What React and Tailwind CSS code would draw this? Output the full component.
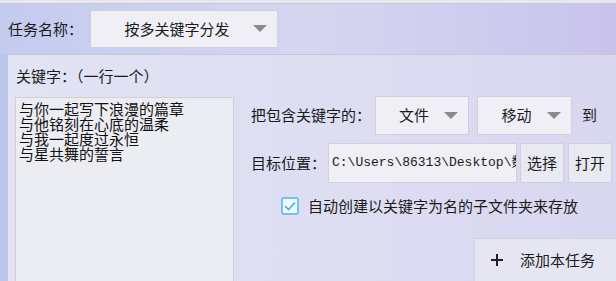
import React from 'react'

const font = { fontFamily: '"Noto Sans CJK SC", "Noto Sans", sans-serif' }

// 下拉框
function Select({ value, className }) {
  return (
    <div
      className={`flex items-center border border-[#d0d0da] bg-[#efeff5] text-[15px] text-[#1a1a1a] ${className}`}
    >
      <span className="flex-1 text-center">{value}</span>
      <svg width="14" height="8" viewBox="0 0 14 8" className="mr-[10px]">
        <path d="M0 0 L14 0 L7 7 Z" fill="#8a8a8e" />
      </svg>
    </div>
  )
}

function Btn({ children, className }) {
  return (
    <div
      className={`flex items-center justify-center border border-[#d0d0da] bg-[#e9e9f3] text-[15px] text-[#1a1a1a] ${className}`}
    >
      {children}
    </div>
  )
}

const keywords = ['与你一起写下浪漫的篇章', '与他铭刻在心底的温柔', '与我一起度过永恒', '与星共舞的誓言']

export default function App() {
  return (
    <div
      className="w-[616px] h-[281px] overflow-hidden flex flex-col bg-gradient-to-r from-[#c3cbef] via-[#d6d6f0] to-[#c9c3ec]"
      style={font}
    >
      {/* 顶部细条 */}
      <div className="h-[4px] bg-[#e7e7f0] border-b border-[#c9c9d6]" />

      {/* 任务名称 */}
      <div className="h-[50px] flex items-center pl-[8px]">
        <span className="w-[82px] text-[15px] text-[#1a1a1a]">任务名称：</span>
        <Select value="按多关键字分发" className="w-[188px] h-[38px] pl-[10px]" />
      </div>

      {/* 下方面板 */}
      <div className="flex-1 flex">
        <div className="w-[7px] bg-[#bcc7ee]" />
        <div className="flex-1 border-t border-l border-[#c8c8d4] bg-gradient-to-r from-[#e2e3f4] via-[#dedef2] to-[#d9d6f0] flex flex-col">
          <div className="h-[42px] flex items-center pl-[8px] text-[15px] text-[#1a1a1a]">
            关键字：（一行一个）
          </div>
          <div className="flex-1 flex">
            {/* 关键字输入框 */}
            <div className="ml-[7px] w-[219px] bg-[#ececf3] border border-[#cfcfd8] border-b-0 pt-[3px] pl-[3px] text-[15px] leading-[15px] text-[#111]">
              {keywords.map((k) => (
                <div key={k}>{k}</div>
              ))}
            </div>

            {/* 右侧设置 */}
            <div className="flex-1 flex flex-col pl-[17px]">
              <div className="flex items-center h-[39px] mt-[-1px]">
                <span className="w-[124px] text-[15px] text-[#1a1a1a]">把包含关键字的：</span>
                <Select value="文件" className="w-[94px] h-[39px] pl-[8px]" />
                <Select value="移动" className="w-[95px] h-[39px] ml-[8px] pl-[8px]" />
                <span className="ml-[10px] text-[15px] text-[#1a1a1a]">到</span>
              </div>
              <div className="flex items-center h-[40px] mt-[8px]">
                <span className="w-[77px] text-[15px] text-[#1a1a1a]">目标位置：</span>
                <div className="w-[189px] h-[40px] flex items-center overflow-hidden whitespace-nowrap border border-[#d0d0da] bg-[#efeff5] pl-[3px] text-[13px] text-[#1a1a1a] font-['Liberation_Mono','Noto_Sans_CJK_SC',monospace]">
                  C:\Users\86313\Desktop\数据
                </div>
                <Btn className="w-[44px] h-[40px] ml-[3px]">选择</Btn>
                <Btn className="w-[44px] h-[40px] ml-[4px]">打开</Btn>
              </div>
              <div className="flex items-center mt-[12px] pl-[30px]">
                <div className="w-[18px] h-[18px] rounded-[3px] border-2 border-[#6cc3f5] bg-[#f4f8fd] flex items-center justify-center">
                  <svg width="12" height="10" viewBox="0 0 12 10">
                    <path d="M1 5 L4.5 8.5 L11 1.5" stroke="#4aa8e8" strokeWidth="1.6" fill="none" />
                  </svg>
                </div>
                <span className="ml-[9px] text-[15px] text-[#1a1a1a]">自动创建以关键字为名的子文件夹来存放</span>
              </div>
              <div className="flex-1 flex justify-end items-end">
                <div className="w-[142px] h-[43px] border border-[#d0d0da] border-r-0 border-b-0 bg-[#e6e6f3] flex items-center pl-[16px] text-[15px] text-[#1a1a1a]">
                  <svg width="12" height="12" viewBox="0 0 12 12">
                    <path d="M6 0 V12 M0 6 H12" stroke="#222" strokeWidth="2" />
                  </svg>
                  <span className="ml-[17px]">添加本任务</span>
                </div>
              </div>
            </div>
          </div>
        </div>
      </div>
    </div>
  )
}
